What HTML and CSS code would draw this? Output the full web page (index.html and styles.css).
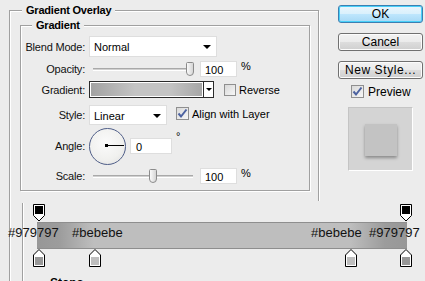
FILE: index.html
```html
<!DOCTYPE html>
<html lang="en">
<head>
    <meta charset="UTF-8">
    <title>Gradient Overlay</title>
    <link rel="stylesheet" href="styles.css">
</head>
<body>
<div class="dialog">
    <div class="group outer">
        <div class="group-title">Gradient Overlay</div>
        <div class="group inner">
            <div class="group-title">Gradient</div>

            <div class="row row-blend">
                <div class="label">Blend Mode:</div>
                <div class="select select-blend">
                    <span>Normal</span>
                    <i class="arrow"></i>
                </div>
            </div>

            <div class="row row-opacity">
                <div class="label">Opacity:</div>
                <div class="slider">
                    <div class="track"></div>
                    <svg class="thumb" style="left: 97px" width="8" height="14" viewBox="0 0 8 14">
                        <defs>
                            <linearGradient id="tg" x1="0" y1="0" x2="1" y2="0">
                                <stop offset="0" stop-color="#fdfdfd"/>
                                <stop offset="1" stop-color="#d2d2d2"/>
                            </linearGradient>
                        </defs>
                        <path d="M0.5 1.5 Q0.5 0.5 1.5 0.5 H6.5 Q7.5 0.5 7.5 1.5 V10 Q7.5 13.5 4 13.5 Q0.5 13.5 0.5 10 Z" fill="url(#tg)" stroke="#8b8b8b"/>
                    </svg>
                </div>
                <div class="input">100</div>
                <div class="unit">%</div>
            </div>

            <div class="row row-gradient">
                <div class="label">Gradient:</div>
                <div class="swatch"></div>
                <div class="swatch-drop"><i class="arrow small"></i></div>
                <div class="check"></div>
                <div class="check-text">Reverse</div>
            </div>

            <div class="row row-style">
                <div class="label">Style:</div>
                <div class="select select-style">
                    <span>Linear</span>
                    <i class="arrow"></i>
                </div>
                <div class="check checked">
                    <svg width="11" height="11" viewBox="0 0 11 11"><path d="M1.5 5.5 L4 8.5 L9.5 1.5" fill="none" stroke="#4c62a0" stroke-width="2"/></svg>
                </div>
                <div class="check-text">Align with Layer</div>
            </div>

            <div class="row row-angle">
                <div class="label">Angle:</div>
                <div class="dial">
                    <div class="dial-dot"></div>
                    <div class="dial-hand"></div>
                </div>
                <div class="input input-angle">0</div>
                <div class="unit degree">°</div>
            </div>

            <div class="row row-scale">
                <div class="label">Scale:</div>
                <div class="slider">
                    <div class="track"></div>
                    <svg class="thumb" style="left: 60px" width="8" height="14" viewBox="0 0 8 14">
                        <path d="M0.5 1.5 Q0.5 0.5 1.5 0.5 H6.5 Q7.5 0.5 7.5 1.5 V10 Q7.5 13.5 4 13.5 Q0.5 13.5 0.5 10 Z" fill="url(#tg)" stroke="#8b8b8b"/>
                    </svg>
                </div>
                <div class="input">100</div>
                <div class="unit">%</div>
            </div>
        </div>
    </div>

    <div class="side">
        <div class="button default">OK</div>
        <div class="button">Cancel</div>
        <div class="button wide">New Style...</div>
        <div class="preview-row">
            <div class="check checked">
                <svg width="11" height="11" viewBox="0 0 11 11"><path d="M1.5 5.5 L4 8.5 L9.5 1.5" fill="none" stroke="#4c62a0" stroke-width="2"/></svg>
            </div>
            <div class="preview-text">Preview</div>
        </div>
        <div class="preview">
            <div class="preview-square"></div>
        </div>
    </div>
</div>

<div class="editor">
    <div class="rail rail-outer"></div>
    <div class="rail rail-inner"></div>

    <div class="bar"></div>

    <!-- opacity stops -->
    <svg class="stop" style="left: 33px; top: 3px" width="12" height="18" viewBox="0 0 12 18">
        <path d="M0.5 0.5 H11.5 V11.5 L6 17 L0.5 11.5 Z" fill="#fff" stroke="#000"/>
        <rect x="2" y="2" width="8" height="8" fill="#000"/>
    </svg>
    <svg class="stop" style="left: 400px; top: 3px" width="12" height="18" viewBox="0 0 12 18">
        <path d="M0.5 0.5 H11.5 V11.5 L6 17 L0.5 11.5 Z" fill="#fff" stroke="#000"/>
        <rect x="2" y="2" width="8" height="8" fill="#000"/>
    </svg>

    <!-- color stops -->
    <svg class="stop" style="left: 33px; top: 48px" width="12" height="18" viewBox="0 0 12 18">
        <path d="M6 0.5 L11.5 6 V17.5 H0.5 V6 Z" fill="#fff" stroke="#000"/>
        <rect x="2" y="8" width="8" height="8" fill="#979797"/>
    </svg>
    <svg class="stop" style="left: 89px; top: 48px" width="12" height="18" viewBox="0 0 12 18">
        <path d="M6 0.5 L11.5 6 V17.5 H0.5 V6 Z" fill="#fff" stroke="#000"/>
        <rect x="2" y="8" width="8" height="8" fill="#bebebe"/>
    </svg>
    <svg class="stop" style="left: 345px; top: 48px" width="12" height="18" viewBox="0 0 12 18">
        <path d="M6 0.5 L11.5 6 V17.5 H0.5 V6 Z" fill="#fff" stroke="#000"/>
        <rect x="2" y="8" width="8" height="8" fill="#bebebe"/>
    </svg>
    <svg class="stop" style="left: 400px; top: 48px" width="12" height="18" viewBox="0 0 12 18">
        <path d="M6 0.5 L11.5 6 V17.5 H0.5 V6 Z" fill="#fff" stroke="#000"/>
        <rect x="2" y="8" width="8" height="8" fill="#979797"/>
    </svg>

    <div class="hex" style="left: 8px">#979797</div>
    <div class="hex" style="left: 72px">#bebebe</div>
    <div class="hex" style="left: 311px">#bebebe</div>
    <div class="hex" style="left: 369px">#979797</div>

    <div class="stops-title">Stops</div>
</div>
</body>
</html>
```

FILE: styles.css
```css
body {
    margin: 0;
    width: 425px;
    height: 281px;
    overflow: hidden;
    position: relative;
    background-color: #ececec;
    font-family: "Liberation Sans", Arial, sans-serif;
    font-size: 11px;
    color: #000;
}

.dialog {
    display: flex;
    align-items: flex-start;
}

/* etched group boxes */
.group {
    box-sizing: border-box;
    border: 1px solid #a0a0a0;
    box-shadow: 1px 1px 0 #fff, inset 1px 1px 0 #fff;
}

.outer {
    margin-left: 9px;
    margin-top: 10px;
    width: 310px;
    height: 260px;
}

.inner {
    margin-left: 10px;
    margin-top: 9px;
    width: 290px;
    height: 166px;
}

.group-title {
    width: max-content;
    margin-top: -7px;
    margin-left: 12px;
    padding: 0 4px;
    line-height: 12px;
    background-color: #ececec;
    font-weight: bold;
    letter-spacing: -0.2px;
}

.inner .group-title {
    margin-left: 11px;
}

/* rows */
.row {
    display: flex;
    align-items: center;
}

.label {
    width: 64px;
    margin-right: 4px;
    text-align: right;
    letter-spacing: -0.2px;
    color: #111;
}

.row-blend {
    margin-top: 5px;
    height: 21px;
}

.row-opacity {
    margin-top: 4px;
    height: 16px;
}

.row-gradient {
    margin-top: 4px;
    height: 17px;
}

.row-style {
    margin-top: 7px;
    height: 20px;
}

.row-angle {
    margin-top: 3px;
    height: 36px;
}

.row-scale {
    margin-top: 4px;
    height: 16px;
}

.select {
    box-sizing: border-box;
    height: 100%;
    display: flex;
    align-items: center;
    justify-content: space-between;
    padding: 1px 5px 0 4px;
    background-color: #fff;
    border: 1px solid #dedede;
}

.select-blend {
    width: 128px;
}

.select-style {
    width: 78px;
}

.arrow {
    width: 0;
    height: 0;
    border-left: 4px solid transparent;
    border-right: 4px solid transparent;
    border-top: 4px solid #000;
}

.arrow.small {
    border-left-width: 3px;
    border-right-width: 3px;
    border-top-width: 3px;
}

.slider {
    position: relative;
    width: 111px;
    height: 100%;
}

.track {
    position: absolute;
    left: 4px;
    top: 7px;
    width: 100px;
    height: 1px;
    background-color: #d0d0d0;
    border-top: 1px solid #a9a9a9;
    border-bottom: 1px solid #fff;
}

.thumb {
    position: absolute;
    top: 1px;
}

.input {
    box-sizing: border-box;
    width: 37px;
    height: 16px;
    padding: 2px 0 0 4px;
    background-color: #fff;
    border: 1px solid #dedede;
}

.unit {
    margin-left: 4px;
    align-self: flex-start;
    margin-top: -1px;
}

.swatch {
    box-sizing: border-box;
    width: 114px;
    height: 17px;
    border: 1px solid #2b2b2b;
    border-right: none;
    background: linear-gradient(to right, #a1a1a1, #c4c4c4 40%, #c4c4c4 70%, #a6a6a6);
    box-shadow: inset 1px 1px 0 #fff, inset -1px -1px 0 #fff;
}

.swatch-drop {
    box-sizing: border-box;
    width: 11px;
    height: 17px;
    display: flex;
    align-items: center;
    justify-content: center;
    background-color: #fff;
    border: 1px solid #2b2b2b;
}

.check {
    box-sizing: border-box;
    width: 12px;
    height: 12px;
    display: flex;
    align-items: center;
    justify-content: center;
    border: 1px solid #8f8f8f;
    background: linear-gradient(135deg, #d9d9d9, #f7f7f7);
}

.row-gradient .check {
    margin-left: 10px;
}

.row-style .check {
    width: 13px;
    height: 13px;
    margin-left: 9px;
    margin-top: -3px;
}

.check-text {
    margin-left: 3px;
}

.row-style .check-text {
    margin-top: -3px;
}

.dial {
    position: relative;
    box-sizing: border-box;
    width: 37px;
    height: 37px;
    border-radius: 50%;
    border: 1.5px solid #4f5e88;
    background: radial-gradient(circle at 45% 40%, #fbfbfb, #f0f0ee 60%, #dcdcdc);
}

.dial-dot {
    position: absolute;
    left: 15px;
    top: 15px;
    width: 3px;
    height: 3px;
    background-color: #000;
}

.dial-hand {
    position: absolute;
    left: 17px;
    top: 16px;
    width: 17px;
    height: 1px;
    background-color: #000;
}

.input-angle {
    width: 42px;
    margin-left: 4px;
    padding-left: 5px;
}

.degree {
    margin-top: 2px;
}

/* right column */
.side {
    margin-left: 19px;
    margin-top: 5px;
    width: 85px;
    font-size: 12px;
}

.button {
    box-sizing: border-box;
    height: 18px;
    margin-bottom: 10px;
    line-height: 16px;
    text-align: center;
    border: 1px solid #707070;
    border-radius: 3px;
    background: linear-gradient(#f2f2f2, #ebebeb 50%, #dddddd 51%, #cfcfcf);
    box-shadow: inset 0 0 0 1px #fcfcfc;
}

.button.default {
    border-color: #3c7fb1;
    background: linear-gradient(#eaf6fd, #d9f0fc 50%, #bee6fd 51%, #a7d9f5);
    box-shadow: inset 0 0 0 1px #48d0f9;
}

.button.wide {
    margin-top: 1px;
    margin-bottom: 0;
    letter-spacing: 0.6px;
}

.preview-row {
    display: flex;
    align-items: center;
    margin-top: 6px;
    padding-left: 13px;
    height: 13px;
}

.preview-row .check {
    width: 13px;
    height: 13px;
}

.preview-text {
    margin-left: 4px;
}

.preview {
    box-sizing: border-box;
    width: 65px;
    height: 64px;
    margin-top: 9px;
    margin-left: 10px;
    padding: 16px 0 0 16px;
    background-color: #d4d4d4;
    border-top: 1px solid #c4c4c4;
    border-left: 1px solid #c4c4c4;
    border-right: 1px solid #fff;
    border-bottom: 1px solid #fff;
}

.preview-square {
    width: 32px;
    height: 32px;
    background-color: #c3c3c3;
    box-shadow: 0 2px 3px rgba(0, 0, 0, 0.35);
}

/* gradient editor strip laid over the lower part */
.editor {
    position: absolute;
    left: 0;
    top: 201px;
    width: 425px;
    height: 80px;
    overflow: hidden;
    background-color: #ececec;
}

.rail {
    position: absolute;
    top: 0;
    width: 1px;
    height: 80px;
    background-color: #a0a0a0;
    box-shadow: 1px 0 0 #fff;
}

.rail-outer {
    left: 9px;
}

.rail-inner {
    left: 22px;
    top: 2px;
}

.bar {
    position: absolute;
    left: 37px;
    top: 21px;
    width: 370px;
    height: 25px;
    border-top: 1px solid #8e8e8e;
    border-bottom: 1px solid #8e8e8e;
    background: linear-gradient(to right, #979797, #9c9c9c 6%, #bebebe 15.4%, #bebebe 84.6%, #9c9c9c 94%, #979797);
}

.stop {
    position: absolute;
}

.hex {
    position: absolute;
    top: 24px;
    line-height: 16px;
    font-size: 13px;
    color: #111;
}

.stops-title {
    position: absolute;
    left: 50px;
    top: 75px;
    line-height: 14px;
    font-size: 12px;
    font-weight: bold;
}
```
